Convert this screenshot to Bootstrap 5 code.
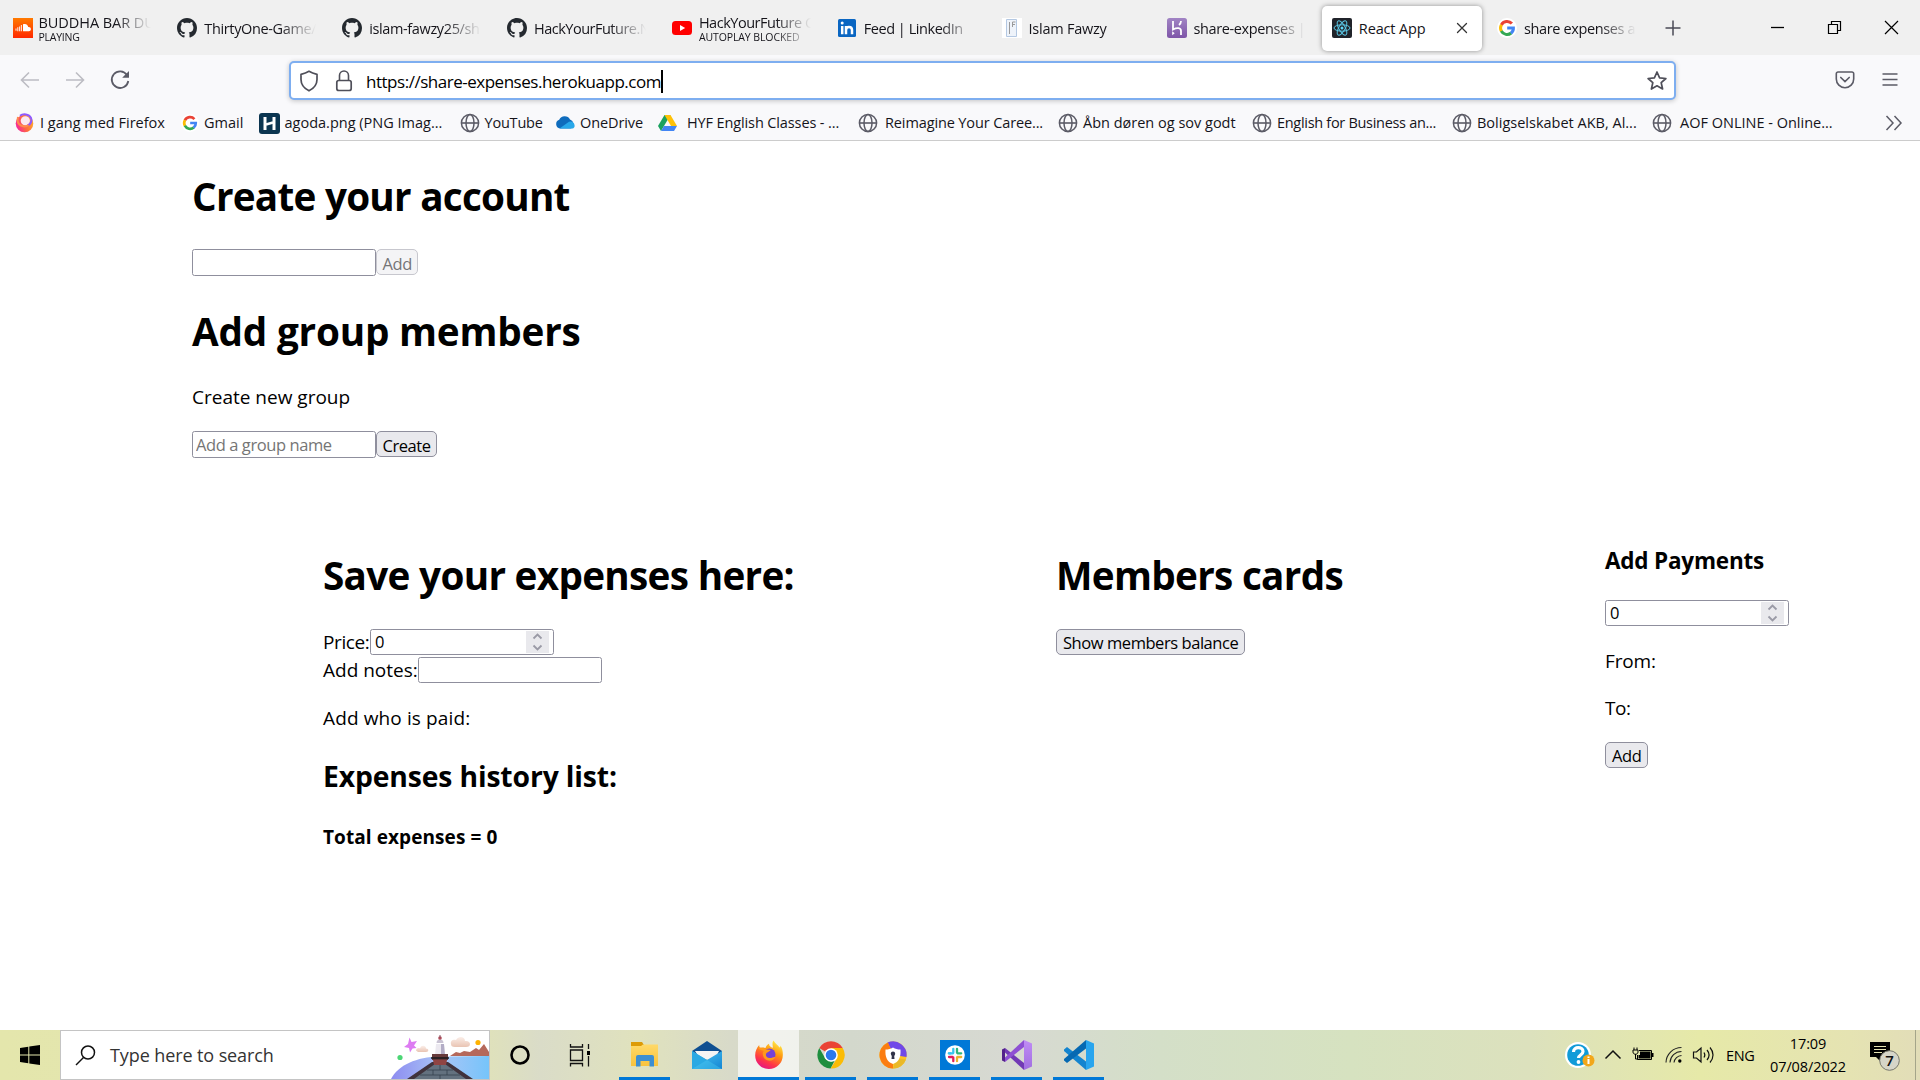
<!DOCTYPE html>
<html lang="en">
<head>
<meta charset="utf-8">
<title>React App</title>
<link href="https://cdn.jsdelivr.net/npm/bootstrap@5.3.0/dist/css/bootstrap.min.css" rel="stylesheet">
<style>
body{width:1920px;height:1080px;overflow:hidden;font-family:"Open Sans","Noto Sans",sans-serif;color:#000;background:#fff;font-size:14.5px}
svg{display:block;flex:none}
/* tab strip */
.tabstrip{height:55px;background:#f0f0f0;padding-left:2.5px}
.tab{width:164.85px;height:45px;flex:none;padding-left:10px;margin-top:1px;letter-spacing:-.37px;color:#15141a}
.tab .tab-label{width:114px;margin-left:7px;padding-top:1px;white-space:nowrap;overflow:hidden;line-height:20px;-webkit-mask-image:linear-gradient(90deg,#000 76px,transparent 112px);mask-image:linear-gradient(90deg,#000 76px,transparent 112px)}
.tab .tab-state{font-size:10.5px;line-height:12px;letter-spacing:-.25px}
.tab .two-line{line-height:17px;padding-top:0}
.tab.current{width:160px;margin-left:.6px;margin-right:3.2px;background:#fff;border-radius:5px;box-shadow:0 0 5px rgba(0,0,0,.4)}
.tab.current .tab-label{width:90px;letter-spacing:-.15px;-webkit-mask-image:none;mask-image:none}
.win-controls{margin-left:auto;padding-right:21px;gap:42px}
/* navigation */
.navrow{height:50px;background:#f9f9fb}
.navbuttons{width:289px;padding-left:18px;gap:21px}
.urlbar{width:1387px;height:39px;margin-top:1px;background:#fff;border:2px solid #7eaef0;border-radius:5px;box-shadow:0 1px 5px rgba(0,0,0,.22);padding:0 6px 0 8px}
.urltext{font-size:17px;letter-spacing:-.48px;margin-left:13px;padding-top:2px}
.caret-bar{width:1.5px;height:23px;background:#000;margin-top:1px}
.navend{margin-left:auto;padding-right:19px;gap:24px}
.bookmarks{height:36px;background:#f9f9fb;border-bottom:1px solid #ccc;padding-left:15px;color:#15141a;white-space:nowrap;padding-top:1px}
.bm{flex:none;display:flex;align-items:center;gap:5px}
.bm.snug{letter-spacing:-.12px}
/* page */
.page-body{height:889px}
.account{padding:27.7px 0 0 192px}
.big-title{font-size:38.7px;line-height:54px;font-weight:700;margin:0;letter-spacing:-.75px}
.big-title.loose{letter-spacing:-.2px;padding-top:1px;margin-bottom:-1px}
.sub-title{font-size:28.3px;line-height:40px;font-weight:700;margin:25px 0 28.4px;letter-spacing:-.13px}
.pay-title{font-size:22.5px;line-height:30px;font-weight:700;margin:-2px 0 24px;letter-spacing:-.2px}
.txt{font-size:19px;line-height:26px;margin:0}
.field{width:184px;height:26px;border:1px solid #8f8f9d;border-radius:2.5px;background:#fff;padding:0 4px;font-size:16.5px;line-height:24px;letter-spacing:-.42px;color:#000}
.field::placeholder{color:#757575;opacity:1}
input.field{padding-left:3px}
.tall,.btn.tall{height:27px}
.btn.plain{height:26px;border:1px solid #8f8f9d;border-radius:5px;background:#e9e9ed;color:#000;font-size:16.5px;line-height:25px;letter-spacing:-.44px;padding:0 0 0 6px;text-align:left;white-space:nowrap}
.btn.plain.tall{line-height:27px;padding-left:5.5px}
.btn.plain:disabled{background:#f4f4f6;border-color:#c7c7ce;color:#747476;opacity:1}
.numfield{display:flex;justify-content:space-between;align-items:center;padding-right:4px}
.spin{width:23px;height:22px;background:#e9e9ed}
.columns-area{display:grid;grid-template-columns:733px 549px 1fr;padding:90px 0 0 323px}
/* taskbar */
.taskbar{height:50px;background:linear-gradient(90deg,#e4e6ac 0,#e2e4b4 460px,#dadcc8 540px,#e0e2bd 640px,#d8dac9 730px,#d3d8cc 850px,#d7d9d2 1010px,#d4dfc8 1160px,#d6e2c0 1350px,#dce1bd 1530px,#e6e9a8 1700px,#e5e3b2 1850px,#e2ddb8 1920px)}
.start{width:60px}
.search{width:430px;height:50px;background:#fff;border:1px solid #c4c4c4;padding-left:14px;color:#333}
.search span{font-size:18px;letter-spacing:-.1px;margin-left:14px}
.task{width:51px;height:50px;border-bottom:3px solid transparent;margin-right:11px;padding-top:2px}
.task.open{border-color:#0078d7}
.task.front{width:61px;background:rgba(255,255,255,.65);margin:0 6.3px 0 -5px}
.tray{margin-left:auto;height:50px}
.clock{width:84px;text-align:center;font-size:14.5px;line-height:23px;letter-spacing:-.1px}
.peek{width:5px;height:50px;border-left:1px solid #a5a58a}
</style>
<script src="https://cdn.jsdelivr.net/npm/bootstrap@5.3.0/dist/js/bootstrap.bundle.min.js"></script>
</head>
<body class="d-flex flex-column">
<svg width="0" height="0" class="position-absolute">
<defs>
<symbol id="globe" viewBox="0 0 20 20"><g fill="none" stroke="#5b5b66" stroke-width="1.5"><circle cx="10" cy="10" r="8.6"/><ellipse cx="10" cy="10" rx="4" ry="8.6"/><path d="M1.5 10h17" stroke-width="1.6"/></g></symbol>
<symbol id="google" viewBox="0 0 20 20"><circle cx="10" cy="10" r="10" fill="#fff"/><g fill="none" stroke-width="3"><path d="M14.9 5.6A6.5 6.5 0 0 0 4.3 7" stroke="#ea4335"/><path d="M4.4 6.8A6.6 6.6 0 0 0 4.4 13.2" stroke="#fbbc05"/><path d="M4.3 13A6.5 6.5 0 0 0 14.2 15" stroke="#34a853"/><path d="M14 15.2A6.3 6.3 0 0 0 16.4 10H10.2" stroke="#4285f4"/></g></symbol>
<symbol id="github" viewBox="0 0 16 16"><path fill="#24292f" fill-rule="evenodd" d="M8 0C3.58 0 0 3.58 0 8c0 3.54 2.29 6.53 5.47 7.59.4.07.55-.17.55-.38 0-.19-.01-.82-.01-1.49-2.01.37-2.53-.49-2.69-.94-.09-.23-.48-.94-.82-1.13-.28-.15-.68-.52-.01-.53.63-.01 1.08.58 1.23.82.72 1.21 1.87.87 2.33.66.07-.52.28-.87.51-1.07-1.78-.2-3.64-.89-3.64-3.95 0-.87.31-1.59.82-2.15-.08-.2-.36-1.02.08-2.12 0 0 .67-.21 2.2.82.64-.18 1.32-.27 2-.27s1.36.09 2 .27c1.53-1.04 2.2-.82 2.2-.82.44 1.1.16 1.92.08 2.12.51.56.82 1.27.82 2.15 0 3.07-1.87 3.75-3.65 3.95.29.25.54.73.54 1.48 0 1.07-.01 1.93-.01 2.2 0 .21.15.46.55.38A8.01 8.01 0 0 0 16 8c0-4.42-3.58-8-8-8z"/></symbol>
<linearGradient id="gSc" x2="0" y2="1"><stop stop-color="#ff7a00"/><stop offset="1" stop-color="#ff2800"/></linearGradient>
<linearGradient id="gFf" x1=".8" y1="0" x2=".3" y2="1"><stop stop-color="#fff44f"/><stop offset=".4" stop-color="#ff980e"/><stop offset=".75" stop-color="#ff3647"/><stop offset="1" stop-color="#e31587"/></linearGradient>
<linearGradient id="gFm" x1="1" y1=".2" x2="0" y2=".6"><stop stop-color="#ffb52e"/><stop offset=".5" stop-color="#ff7139"/><stop offset="1" stop-color="#f5279b"/></linearGradient>
<linearGradient id="gHk" x2="0" y2="1"><stop stop-color="#a184c4"/><stop offset="1" stop-color="#7e55a8"/></linearGradient>
<linearGradient id="gFd" x2="0" y2="1"><stop stop-color="#ffd968"/><stop offset="1" stop-color="#f8c33d"/></linearGradient>
<linearGradient id="gMl" x2="1" y2="1"><stop stop-color="#4cc9f5"/><stop offset="1" stop-color="#1585d3"/></linearGradient>
<linearGradient id="gSea" x2="1" y2="0"><stop stop-color="#8d8cf0"/><stop offset=".5" stop-color="#a9c5f7"/><stop offset="1" stop-color="#76c4fa"/></linearGradient>
<linearGradient id="gCl" x2="0" y2="1"><stop stop-color="#fbeee8"/><stop offset="1" stop-color="#e9c4b3"/></linearGradient>
<linearGradient id="gVs" x2="0" y2="1"><stop stop-color="#c08cf5"/><stop offset="1" stop-color="#a06ee0"/></linearGradient>
</defs>
</svg>

<header>
<div class="tabstrip d-flex align-items-center">
  <div class="tab d-flex align-items-center"><svg width="20" height="20" viewBox="0 0 20 20"><path fill="url(#gSc)" d="M0 0h20v20H0z"/><path fill="#fff" d="M10 6.2c3-1 5 .5 5.2 2.9 1.7-.2 2.7.8 2.7 2.1 0 1.1-.9 2-2 2H10z"/><path d="M3 10.5v2.300M4.800 9.200v4M6.600 8.600v4.600M8.400 7v6.200" stroke="#ffe3d8" stroke-width="1.100"/></svg><div class="tab-label two-line" style="margin-left:6px;letter-spacing:-.05px">BUDDHA BAR DU<div class="tab-state">PLAYING</div></div></div>
  <div class="tab d-flex align-items-center"><svg width="20" height="20"><use href="#github"/></svg><div class="tab-label">ThirtyOne-Game/</div></div>
  <div class="tab d-flex align-items-center"><svg width="20" height="20"><use href="#github"/></svg><div class="tab-label">islam-fawzy25/sh</div></div>
  <div class="tab d-flex align-items-center"><svg width="20" height="20"><use href="#github"/></svg><div class="tab-label" style="letter-spacing:-.5px">HackYourFuture.N</div></div>
  <div class="tab d-flex align-items-center"><svg width="20" height="20" viewBox="0 0 20 20"><rect y="3" width="20" height="14" rx="3.500" fill="#f00"/><path d="M8 7l5.200 3L8 13z" fill="#fff"/></svg><div class="tab-label two-line" style="letter-spacing:-.48px">HackYourFuture C<div class="tab-state" style="letter-spacing:-.1px">AUTOPLAY BLOCKED</div></div></div>
  <div class="tab d-flex align-items-center"><svg width="20" height="20" viewBox="0 0 20 20"><rect x="1" y="1" width="18" height="18" rx="1.500" fill="#0a66c2"/><path fill="none" stroke="#fff" stroke-width="2.500" d="M5.200 8v8.300M9 16.300V8M9 12c0-4 6-4 6 0v4.300"/><circle cx="5.200" cy="5" r="1.500" fill="#fff"/></svg><div class="tab-label" style="letter-spacing:-.45px">Feed | LinkedIn</div></div>
  <div class="tab d-flex align-items-center"><svg width="20" height="20" viewBox="0 0 20 20"><path fill="#fff" d="M0 0h20v20H0z"/><path fill="#eef3fa" stroke="#b4c8e2" d="M4.500 1.500h10v17h-10z"/><path d="M7.500 4v12M10.500 9V4h3M10.500 6.500H13" stroke="#999" fill="none"/></svg><div class="tab-label" style="letter-spacing:-.25px">Islam Fawzy</div></div>
  <div class="tab d-flex align-items-center" style="padding-left:11px"><svg width="20" height="20" viewBox="0 0 20 20"><rect width="20" height="20" rx="2.500" fill="url(#gHk)"/><path d="M6 3v8.500c4-2 8-2 8 1.500v4M14 3c0 1.500-.6 2.800-2 4" fill="none" stroke="#fff" stroke-width="1.800"/><path d="M5.200 13.200l2.500 2-2.500 2z" fill="#fff"/></svg><div class="tab-label" style="margin-left:6px">share-expenses |</div></div>
  <div class="tab current d-flex align-items-center"><svg width="20" height="20" viewBox="0 0 20 20"><rect width="20" height="20" rx="2" fill="#20232a"/><g fill="none" stroke="#5bc8e6" stroke-width="1"><ellipse cx="10" cy="10" rx="8" ry="3.200"/><ellipse cx="10" cy="10" rx="8" ry="3.200" transform="rotate(60 10 10)"/><ellipse cx="10" cy="10" rx="8" ry="3.200" transform="rotate(120 10 10)"/></g><circle cx="10" cy="10" r="1.500" fill="#61dafb"/></svg><div class="tab-label">React App</div><svg class="ms-1" width="18" height="18" viewBox="0 0 18 18"><path d="M4.500 4.500l9 9M13.500 4.500l-9 9" stroke="#333" stroke-width="1.300" stroke-linecap="round"/></svg></div>
  <div class="tab d-flex align-items-center" style="padding-left:12px"><svg width="20" height="20"><use href="#google"/></svg><div class="tab-label">share expenses a</div></div>
  <svg width="20" height="20" viewBox="0 0 20 20" style="margin-left:13px"><path d="M10 2.500v15M2.500 10h15" stroke="#4a4a55" stroke-width="1.500"/></svg>
  <div class="win-controls d-flex align-items-center">
    <svg width="15" height="15"><path d="M1 7.500h13" stroke="#000" stroke-width="1.300"/></svg>
    <svg width="15" height="15" viewBox="0 0 15 15"><path d="M1.500 4.500h9v9h-9zM4.500 4.500v-3h9v9h-3" fill="none" stroke="#000" stroke-width="1.200"/></svg>
    <svg width="15" height="15"><path d="M1 1l13 13M14 1L1 14" stroke="#000" stroke-width="1.200"/></svg>
  </div>
</div>
<div class="navrow d-flex align-items-center">
  <div class="navbuttons d-flex align-items-center">
    <svg width="24" height="24" viewBox="0 0 24 24"><path d="M21 12H3.500M11 4.500L3.500 12l7.500 7.500" fill="none" stroke="#bcbcc3" stroke-width="1.600"/></svg>
    <svg width="24" height="24" viewBox="0 0 24 24"><path d="M3 12h17.500M13 4.500l7.500 7.500-7.500 7.500" fill="none" stroke="#bcbcc3" stroke-width="1.600"/></svg>
    <svg width="24" height="24" viewBox="0 0 24 24"><path d="M19 7A8.300 8.300 0 1 0 20.300 13" fill="none" stroke="#5b5b66" stroke-width="1.800"/><path d="M21 3v6.800h-6.800z" fill="#5b5b66"/></svg>
  </div>
  <div class="urlbar d-flex align-items-center">
    <svg width="20" height="22" viewBox="0 0 20 22"><path d="M10 1.300c2.400 1.500 5 2.400 8 3v5.200c0 5-3.400 9-8 11.300-4.600-2.300-8-6.300-8-11.300V4.300c3-.6 5.600-1.500 8-3z" fill="none" stroke="#4f4f59" stroke-width="1.700" stroke-linejoin="round"/></svg>
    <svg width="18" height="22" viewBox="0 0 18 22" style="margin-left:16px"><path d="M4.500 11V5.500a4.500 4.500 0 0 1 9 0V11" fill="none" stroke="#4f4f59" stroke-width="1.600"/><rect x="1.800" y="10.500" width="14.400" height="10" rx="2" fill="none" stroke="#4f4f59" stroke-width="1.700"/></svg>
    <span class="urltext">https://share-expenses.herokuapp.com</span><span class="caret-bar"></span>
    <svg class="ms-auto" width="22" height="22" viewBox="0 0 22 22"><path d="M11 2l2.600 5.800 6.300.7-4.700 4.200 1.400 6.300L11 15.800 5.400 19l1.400-6.300L2.100 8.500l6.300-.7z" fill="none" stroke="#4f4f59" stroke-width="1.700" stroke-linejoin="round"/></svg>
  </div>
  <div class="navend d-flex align-items-center">
    <svg width="20" height="20" viewBox="0 0 20 20"><path d="M3 2h14a1.700 1.700 0 0 1 1.700 1.700V9A8.700 8.700 0 0 1 1.300 9V3.700A1.700 1.700 0 0 1 3 2z" fill="none" stroke="#5b5b66" stroke-width="1.600"/><path d="M5.800 7.500l4.200 4 4.200-4" fill="none" stroke="#5b5b66" stroke-width="1.700" stroke-linecap="round"/></svg>
    <svg width="22" height="20" viewBox="0 0 22 20"><path d="M3.500 4h15M3.500 9.500h15M3.500 15h15" stroke="#5b5b66" stroke-width="1.600"/></svg>
  </div>
</div>
<div class="bookmarks d-flex align-items-center">
  <div class="bm" style="width:166px"><svg width="20" height="20" viewBox="0 0 20 20"><circle cx="9.500" cy="10.500" r="8.800" fill="url(#gFm)"/><circle cx="10.300" cy="7.800" r="4.600" fill="#fbe9f2"/><path d="M5 2.800C8 .5 14 .8 16 5c1.200 3-.4 6.500-3.400 7.500" fill="none" stroke="#9059ff" stroke-width="2"/><path d="M3 4c-1 4 0 7 3 8.500 3 1.300 6 .8 7.500-.5" fill="none" stroke="#ff8a50" stroke-width="2"/></svg>I gang med Firefox</div>
  <div class="bm" style="width:77.500px"><svg width="18" height="18"><use href="#google"/></svg>Gmail</div>
  <div class="bm" style="width:201px"><svg width="21" height="21" viewBox="0 0 21 21"><rect width="21" height="21" rx="3" fill="#0b3550"/><path d="M6 4v13M15 4v13" stroke="#fff" stroke-width="3"/><path d="M7 11.500l7-2" stroke="#fff" stroke-width="2.500"/></svg>agoda.png (PNG Imag...</div>
  <div class="bm" style="width:95.500px;letter-spacing:-.2px"><svg width="20" height="20"><use href="#globe"/></svg>YouTube</div>
  <div class="bm" style="width:103px;letter-spacing:-.1px"><svg width="20" height="20" viewBox="0 0 20 20"><path d="M5 15.500a4.500 4.500 0 0 1-.8-8.700A6 6 0 0 1 15 6.500a5 5 0 0 1 1 9z" fill="#0f6cbd"/><path d="M4.500 15.600L14 8.700a4.300 4.300 0 0 1 5.500 5c-.5 1.200-1.500 1.900-3 1.900z" fill="#28a8ea"/></svg>OneDrive</div>
  <div class="bm snug" style="width:200px;gap:10px"><svg width="19" height="20" viewBox="0 0 19 20"><path d="M6.500 2h6L6 13l-3 5-3-5z" fill="#1aa260"/><path d="M6.500 2h6l6.500 11h-6z" fill="#ffc107"/><path d="M6 13h13l-3 5H3z" fill="#4285f4"/></svg>HYF English Classes - ...</div>
  <div class="bm snug" style="width:200px;gap:7px"><svg width="20" height="20"><use href="#globe"/></svg>Reimagine Your Caree...</div>
  <div class="bm" style="width:194px"><svg width="20" height="20"><use href="#globe"/></svg>Åbn døren og sov godt</div>
  <div class="bm" style="width:200px;gap:5px;letter-spacing:-.3px"><svg width="20" height="20"><use href="#globe"/></svg>English for Business an...</div>
  <div class="bm" style="width:200px;gap:5px"><svg width="20" height="20"><use href="#globe"/></svg>Boligselskabet AKB, Al...</div>
  <div class="bm" style="width:232px;gap:8px"><svg width="20" height="20"><use href="#globe"/></svg>AOF ONLINE - Online...</div>
  <svg width="20" height="20" viewBox="0 0 20 20"><path d="M2.500 3l6.500 7-6.500 7M10.500 3l6.500 7-6.500 7" fill="none" stroke="#5b5b66" stroke-width="1.500"/></svg>
</div>
</header>

<main class="page-body">
  <section class="account">
    <h1 class="big-title">Create your account</h1>
    <form class="d-flex" style="margin:26.300px 0 27px"><input class="field tall" type="text"><button type="button" class="btn plain tall" style="width:42px" disabled>Add</button></form>
    <h1 class="big-title loose">Add group members</h1>
    <p class="txt" style="margin:26.600px 0 21.400px">Create new group</p>
    <form class="d-flex"><input class="field tall" type="text" placeholder="Add a group name"><button type="button" class="btn plain tall" style="width:61px">Create</button></form>
  </section>
  <div class="columns-area">
    <section>
      <h1 class="big-title" style="letter-spacing:-.700px">Save your expenses here:</h1>
      <div class="d-flex" style="margin:27px 0 2px"><label class="txt" style="width:47px;letter-spacing:-.400px">Price:</label><div class="field numfield">0<span class="spin"><svg width="23" height="22"><path d="M7.500 7.500l4-4 4 4M7.500 14.500l4 4 4-4" fill="none" stroke="#9a9aa6" stroke-width="1.800"/></svg></span></div></div>
      <div class="d-flex"><label class="txt" style="width:95px">Add notes:</label><input class="field" type="text"></div>
      <p class="txt" style="margin-top:21.600px;letter-spacing:.12px">Add who is paid:</p>
      <h2 class="sub-title">Expenses history list:</h2>
      <h4 class="txt fw-bold" style="letter-spacing:.08px">Total expenses = 0</h4>
    </section>
    <section>
      <h1 class="big-title" style="letter-spacing:-.700px">Members cards</h1>
      <button type="button" class="btn plain" style="width:189px;margin-top:27px">Show members balance</button>
    </section>
    <section>
      <h3 class="pay-title">Add Payments</h3>
      <div class="field numfield">0<span class="spin"><svg width="23" height="22"><path d="M7.500 7.500l4-4 4 4M7.500 14.500l4 4 4-4" fill="none" stroke="#9a9aa6" stroke-width="1.800"/></svg></span></div>
      <p class="txt" style="margin:21.600px 0 21px;letter-spacing:-.15px">From:</p>
      <p class="txt" style="margin-bottom:21.400px;letter-spacing:-.5px">To:</p>
      <button type="button" class="btn plain" style="width:43px">Add</button>
    </section>
  </div>
</main>

<footer class="taskbar d-flex align-items-center">
  <div class="start d-flex justify-content-center"><svg width="20" height="20" viewBox="0 0 20 20"><path d="M0 3l8.300-1.200v7.700H0zM9.300 1.600L20 0v9.500H9.300zM0 10.500h8.300v7.700L0 17zM9.300 10.500H20V20L9.300 18.400z"/></svg></div>
  <div class="search d-flex align-items-center">
    <svg width="21" height="21" viewBox="0 0 21 21"><circle cx="13" cy="7.500" r="6.500" fill="none" stroke="#111" stroke-width="1.500"/><path d="M8.500 12.500L1 20" stroke="#111" stroke-width="1.500"/></svg>
    <span>Type here to search</span>
    <svg class="ms-auto" width="100" height="48" viewBox="0 0 100 48">
      <path d="M2 48C9 34 28 26 50 25.500L100 25v23z" fill="url(#gSea)"/>
      <path d="M61 25l6-4 4 1 4-2 6 1 6-4 3 2 5-6 5 8v4z" fill="#b5685a"/>
      <path d="M20.500 6.500l2 4.500 5.500-1-3 4.500 2.500 2.500-4 .5-2.500 4-1-4.500-5-1 4-3z" fill="#dd7cf2"/>
      <circle cx="11" cy="26.500" r="2.600" fill="#4cd675"/><circle cx="89" cy="11.500" r="2.600" fill="#ffb300"/>
      <path d="M27 19.500c0-3 4-3 4-2 1-4 6-3 6 0 3 0 3 3.500 0 3.500h-8z" fill="url(#gCl)"/>
      <path d="M62 13c-1-4 3-5 5-4 3-5 9-3 9 1 6-1 7 6 1 6H66c-3 0-4-1-4-3z" fill="url(#gCl)"/>
      <path d="M18 48l25-17h16l25 17z" fill="#40323c"/><path d="M25 48l21-15h10l21 15z" fill="#63717f"/>
      <path d="M38 39h26M31 44h40M51 33v6M44 39v5M58 39v5M51 44v4" stroke="#36424e" stroke-width=".8"/>
      <path d="M44 29h14l-1 5H45z" fill="#8f4443"/><path d="M47 13h8l1 11H46z" fill="#ece9f0"/><path d="M52 13h3l1 11h-4z" fill="#b3adc6"/>
      <path d="M43 23h16v6H43z" fill="#673a3b"/><path d="M42 27h18" stroke="#17181d" stroke-width="1.500"/><path d="M47.500 12c0-5 7-5 7 0z" fill="#c9c3d3"/><circle cx="51" cy="7" r="1.800" fill="#b24b5a"/><path d="M51 4v3" stroke="#8b5260"/>
    </svg>
  </div>
  <div class="d-flex align-items-center" style="padding-left:19px;width:129px;gap:38px"><svg width="22" height="22"><circle cx="11" cy="11" r="8.500" fill="none" stroke="#000" stroke-width="2.600"/></svg>
  <svg width="22" height="24" viewBox="0 0 22 24"><path d="M1.500 7v10.500h12V7zM1.500 1v3h12V1M1.500 23.500v-3h12v3M19.500 1v5M19.500 13v10.500" fill="none" stroke="#111" stroke-width="1.300"/><path d="M18 8h3v4h-3z"/></svg></div>
  <div class="task open d-flex align-items-center justify-content-center"><svg width="30" height="28" viewBox="0 0 30 28"><path d="M1 1h11l2 3v5H1z" fill="#dd9b07"/><path d="M1 5h10l2-1.500h15V25H1z" fill="url(#gFd)"/><path d="M6 25.500V16a2 2 0 0 1 2-2h14a2 2 0 0 1 2 2v9.500h-4.500V20h-9v5.500z" fill="#3d8fd1"/></svg></div>
  <div class="task d-flex align-items-center justify-content-center"><svg width="30" height="30" viewBox="0 0 30 30"><path d="M0 11L15 1l15 10v3H0z" fill="#0f4f91"/><path d="M3 11h24l-4 8H8z" fill="#f4f4f4"/><path d="M0 11l15 9 15-9v18H0z" fill="url(#gMl)"/><path d="M0 11l15 9-15 9z" fill="#2ba9e3"/><path d="M15 20L30 11v0L0 29h30z" fill="#48c8f0" opacity=".45"/></svg></div>
  <div class="task open front d-flex align-items-center justify-content-center"><svg width="30" height="30" viewBox="0 0 30 30"><path d="M15 29A13.500 13.500 0 0 1 1.200 15c0-4 1.500-7 4-10 0 1.500.4 2.500 1.200 3.300C8 7.300 10 7.300 11.500 8c.5-2 1.800-3.500 3.500-4.300C15 6 16.500 7 19 7.800 18.500 5 18 2.500 19.500.5c1.500 3 4.500 4.500 6 7 .7-.3 1-1 1-2C28.500 9 29 12 28.800 15.500A13.800 13.800 0 0 1 15 29z" fill="url(#gFf)"/><circle cx="15.500" cy="14.500" r="6" fill="#7542d6"/><path d="M4 8c3-1 6-.5 8 1.500 2 .2 3.700 0 4.500.5-.2 1.500-3.500 2-4.300 3.500-1 2 .5 4.500 3.300 4.500 3 0 4-1.500 6-1-1.500 3.500-5.500 4.500-9 3C9 18.500 7.500 13 10 11c-2-.5-4-1-6-3z" fill="#ff9a1b"/></svg></div>
  <div class="task open d-flex align-items-center justify-content-center"><svg width="28" height="28" viewBox="0 0 28 28"><path d="M14 14L2.300 7A13.600 13.600 0 0 1 25.700 7z" fill="#ea4335"/><path d="M14 14V7h11.700A13.600 13.600 0 0 1 13.600 27.600l6.300-10.200z" fill="#fbbc05"/><path d="M2.300 7l6 10.400L14 20.500l3.500-.5-4 7.600A13.600 13.600 0 0 1 2.300 7z" fill="#1e8e3e"/><circle cx="14" cy="14" r="6.800" fill="#fff"/><circle cx="14" cy="14" r="5.300" fill="#2b78ed"/></svg></div>
  <div class="task open d-flex align-items-center justify-content-center"><svg width="28" height="28" viewBox="0 0 28 28"><circle cx="14" cy="14" r="13.600" fill="#ffc325"/><path d="M15 14L8.500 1.600A13.600 13.600 0 0 1 27.500 16z" fill="#7048e8"/><path d="M14 14L9 1.400A13.600 13.600 0 0 0 14 27.600z" fill="#fb7d12"/><path d="M14 27.600a13.600 13.600 0 0 0 13-9L17 17z" fill="#eab928"/><path d="M6.500 8.500c3 0 5-.5 7.500-2 2.500 1.500 4.500 2 7.500 2C22 16 20 21 14 23 8 21 6 16 6.500 8.500z" fill="#fff"/><circle cx="14" cy="12.800" r="2.200" fill="#303348"/><path d="M13 13h2l.5 5h-3z" fill="#303348"/></svg></div>
  <div class="task open d-flex align-items-center justify-content-center"><svg width="30" height="30" viewBox="0 0 30 30"><path d="M0 0h30v30H0z" fill="#0078d7"/><circle cx="15" cy="15" r="9.800" fill="#fff"/><g stroke-width="2.300" stroke-linecap="round" fill="none"><path d="M13.300 8.800v4M8.800 13.300h1.700" stroke="#36c5f0"/><path d="M9 13.300h4" stroke="#36c5f0"/><path d="M17 8.800v4M17.500 13.300h3.700" stroke="#2eb67d"/><path d="M9 17h3.500M13.300 17.500v3.700" stroke="#e01e5a"/><path d="M17 17.500v3.700M17.500 17h3.700" stroke="#ecb22e"/></g></svg></div>
  <div class="task open d-flex align-items-center justify-content-center"><svg width="30" height="30" viewBox="0 0 30 30"><path d="M0 9.500L3 8v14l-3-1.500z" fill="#52218a"/><path d="M3 8l19 15v7L3 12.500z" fill="#7139b5"/><path d="M3 22L22 7V0L3 17.500z" fill="#8e50d3"/><path d="M22 0l8 3.500v23L22 30z" fill="url(#gVs)"/></svg></div>
  <div class="task open d-flex align-items-center justify-content-center"><svg width="30" height="30" viewBox="0 0 30 30"><path d="M0 9.500L3 7l19 14.500V30L0 11z" fill="#1384cf"/><path d="M0 20.500L3 23 22 8.500V0L0 19z" fill="#0669b2"/><path d="M22 0l8 3.500v23L22 30z" fill="#28a5ee"/></svg></div>
  <div class="tray d-flex align-items-center">
    <svg width="30" height="30" viewBox="0 0 30 30"><circle cx="13" cy="15" r="13" fill="#fff"/><circle cx="13" cy="15" r="10.800" fill="#119bd8"/><path d="M8.500 12c0-6 9.500-5.500 9.500-.5 0 3.500-4.500 3.500-4.500 6.500" fill="none" stroke="#fff" stroke-width="3.200"/><circle cx="13.500" cy="22" r="1.900" fill="#fff"/><circle cx="23.500" cy="20.500" r="6" fill="#f2a71b"/><path d="M23.500 19v5M23.500 16.500v1.500" stroke="#fff" stroke-width="2"/></svg>
    <svg width="18" height="18" viewBox="0 0 18 18" style="margin-left:9px"><path d="M1.500 12.500L9 5l7.500 7.500" fill="none" stroke="#111" stroke-width="1.500"/></svg>
    <svg width="22" height="18" viewBox="0 0 22 18" style="margin-left:10px"><path d="M7 4.500h12.500v9H5.500V9" fill="none" stroke="#000"/><path d="M8 5.500h10.500v7h-12V9H8zM20 7h1.500v4H20z"/><path d="M1 4h5v2c0 3-5 3-5 0zM2 1.500V4M5 1.500V4M3.500 8v5H6" stroke="#000" fill="none"/></svg>
    <svg width="18" height="18" viewBox="0 0 18 18" style="margin-left:11px"><g fill="none" stroke="#222" stroke-width="1.100"><path d="M1 16.500A15.500 15.500 0 0 1 16.500 1.500M5 16.500A11.500 11.500 0 0 1 16.500 5.500M9 16.500A8 8 0 0 1 16.500 9.500"/></g><circle cx="14.800" cy="15" r="1.700"/></svg>
    <svg width="22" height="20" viewBox="0 0 22 20" style="margin-left:9px"><path d="M1.500 7v6h3L9 17V3L4.500 7zM12 7.500c1 1.500 1 3.500 0 5M15 5c2.500 3 2.500 7 0 10M18 2.500c4 4.500 4 10.500 0 15" fill="none" stroke="#111" stroke-width="1.200"/></svg>
    <span style="margin-left:12px;width:28px;letter-spacing:-.300px;padding-top:1px">ENG</span>
    <div class="clock" style="margin-left:12px">17:09<br>07/08/2022</div>
    <div class="position-relative" style="width:45px;margin-left:20px"><svg width="32" height="32" viewBox="0 0 32 32"><path d="M0 3h20v15H10v4l-4-4H0z"/><path d="M4 7.500h12M4 10.500h12M4 13.500h8" stroke="#e5e3b2" stroke-width="1.200"/><circle cx="19.500" cy="21.500" r="9.800" fill="#d6d5c8" stroke="#77776c"/><text x="15.300" y="27" font-size="15" font-weight="600" fill="#111">7</text></svg></div>
    <div class="peek"></div>
  </div>
</footer>
</body>
</html>
